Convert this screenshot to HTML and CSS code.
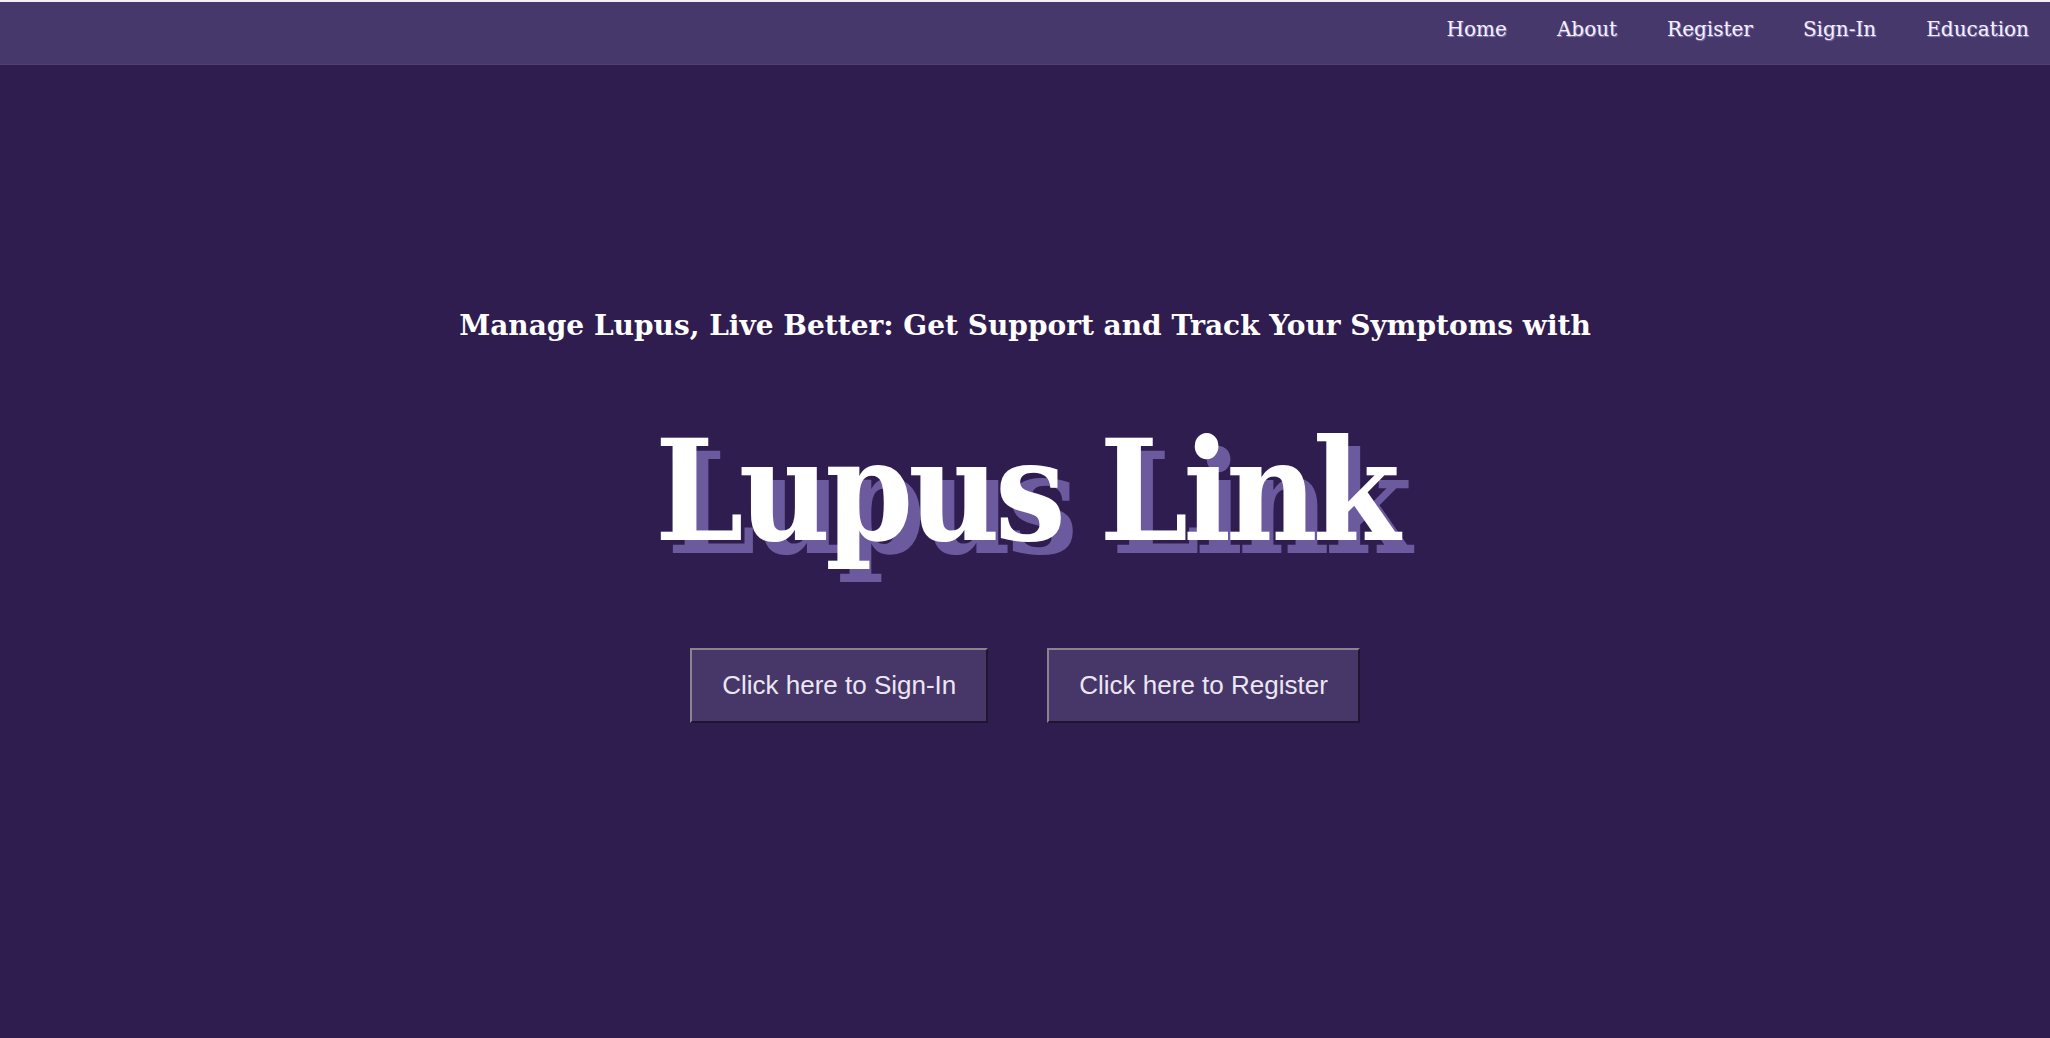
FILE: index.html
```html
<!DOCTYPE html>
<html lang="en">
<head>
<meta charset="utf-8">
<title>Lupus Link</title>
<link rel="stylesheet" href="styles.css">
</head>
<body>
<header class="topbar">
  <nav class="nav">
    <a class="nav-link" href="#">Home</a>
    <a class="nav-link" href="#">About</a>
    <a class="nav-link" href="#">Register</a>
    <a class="nav-link" href="#">Sign-In</a>
    <a class="nav-link" href="#">Education</a>
  </nav>
</header>
<main class="hero">
  <p class="tagline">Manage Lupus, Live Better: Get Support and Track Your Symptoms with</p>
  <h1 class="brand">Lupus Link</h1>
  <div class="actions">
    <button class="btn" type="button">Click here to Sign-In</button>
    <button class="btn" type="button">Click here to Register</button>
  </div>
</main>
</body>
</html>
```

FILE: styles.css
```css
html, body {
  margin: 0;
  padding: 0;
  height: 100%;
}
body {
  background: #2f1d50;
  font-family: "DejaVu Serif", serif;
  color: #ffffff;
}
.topbar {
  border-top: 2px solid #f3f1f5;
  background: #47386b;
  height: 62px;
  box-shadow: 0 1px 0 #4e4072;
  display: flex;
  justify-content: flex-end;
  align-items: center;
}
.nav {
  display: flex;
  gap: 50px;
  padding-right: 21px;
  padding-bottom: 8px;
}
.nav-link {
  font-family: "DejaVu Serif", serif;
  font-size: 20px;
  color: #f4f0f8;
  text-decoration: none;
  text-shadow: 1px 1px 1px #8e7cbb;
}
.hero {
  display: flex;
  flex-direction: column;
  align-items: center;
  padding-top: 244px;
}
.tagline {
  margin: 0;
  font-family: "DejaVu Serif", serif;
  font-weight: bold;
  font-size: 28px;
  line-height: 36px;
  color: #ffffff;
}
.brand {
  margin: 67px 0 0;
  font-family: "DejaVu Serif Condensed", "DejaVu Serif", serif;
  font-weight: bold;
  font-size: 140px;
  letter-spacing: -5px;
  line-height: 160px;
  color: #ffffff;
  text-shadow: 12px 13px 0 #6b5a9e;
}
.actions {
  display: flex;
  gap: 59px;
  margin-top: 77px;
}
.btn {
  font-family: "Liberation Sans", Arial, sans-serif;
  font-size: 26px;
  color: #ece6f4;
  background: #463768;
  border: 2px solid;
  border-color: #8a8390 #1e1630 #1e1630 #8a8390;
  height: 75px;
  padding: 0 30px;
  cursor: pointer;
}
```
